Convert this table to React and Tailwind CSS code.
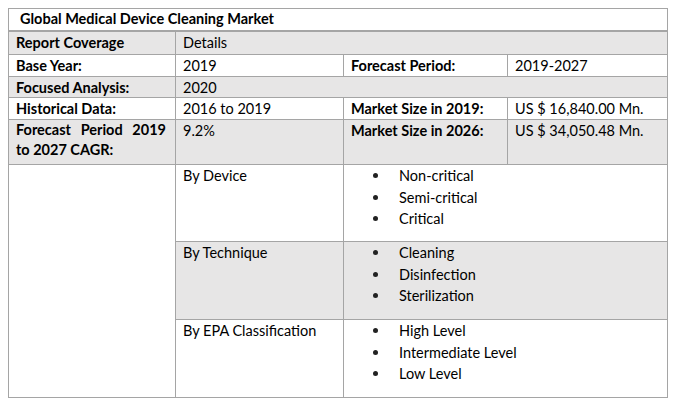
import { Fragment } from "react";

const segments = [
  { name: "By Device", items: ["Non-critical", "Semi-critical", "Critical"], gray: false },
  { name: "By Technique", items: ["Cleaning", "Disinfection", "Sterilization"], gray: true },
  { name: "By EPA Classification", items: ["High Level", "Intermediate Level", "Low Level"], gray: false },
];

export default function App() {
  const cell = "pl-[7px] pr-2 leading-[21px]";
  const gray = "bg-[#e7e6e6]";
  const white = "bg-white";

  return (
    <div
      className="w-[677px] h-[405px] bg-white pt-2 pl-2 text-[14.5px] text-black"
      style={{ fontFamily: "Lato, 'Open Sans', sans-serif" }}
    >
      <div className="w-[660px] border border-[#a5a5a5]">
        {/* Title */}
        <div className="h-[23px] border-b-2 border-[#a5a5a5] pl-[11px] font-bold leading-[20px]">
          Global Medical Device Cleaning Market
        </div>

        {/* Table body */}
        <div className="grid grid-cols-[166px_167px_163px_159px] grid-rows-[22px_21px_20px_21px_44px_76px_77px_77px] gap-px bg-[#a5a5a5]">
          <div className={`${cell} ${gray} font-bold`}>Report Coverage</div>
          <div className={`${cell} ${gray} col-span-3`}>Details</div>

          <div className={`${cell} ${white} font-bold`}>Base Year:</div>
          <div className={`${cell} ${white}`}>2019</div>
          <div className={`${cell} ${white} font-bold`}>Forecast Period:</div>
          <div className={`${cell} ${white}`}>2019-2027</div>

          <div className={`${cell} ${gray} font-bold`}>Focused Analysis:</div>
          <div className={`${cell} ${gray} col-span-3`}>2020</div>

          <div className={`${cell} ${white} font-bold`}>Historical Data:</div>
          <div className={`${cell} ${white}`}>2016 to 2019</div>
          <div className={`${cell} ${white} font-bold`}>Market Size in 2019:</div>
          <div className={`${cell} ${white}`}>US $ 16,840.00 Mn.</div>

          <div className={`pl-[7px] pr-[9px] ${gray} font-bold leading-[20px] text-justify`}>
            Forecast Period 2019 to 2027 CAGR:
          </div>
          <div className={`${cell} ${gray}`}>9.2%</div>
          <div className={`${cell} ${gray} font-bold`}>Market Size in 2026:</div>
          <div className={`${cell} ${gray}`}>US $ 34,050.48 Mn.</div>

          <div className="row-span-3 bg-white"></div>
          {segments.map((seg) => (
            <Fragment key={seg.name}>
              <div className={`pl-[7px] leading-[21.5px] ${seg.gray ? gray : white}`}>
                {seg.name}
              </div>
              <div className={`col-span-2 leading-[21.5px] ${seg.gray ? gray : white}`}>
                {seg.items.map((item) => (
                  <div key={item} className="flex items-center">
                    <span className="ml-[29px] w-[5px] h-[5px] rounded-full bg-[#222]"></span>
                    <span className="ml-[21px]">{item}</span>
                  </div>
                ))}
              </div>
            </Fragment>
          ))}
        </div>
      </div>
    </div>
  );
}
